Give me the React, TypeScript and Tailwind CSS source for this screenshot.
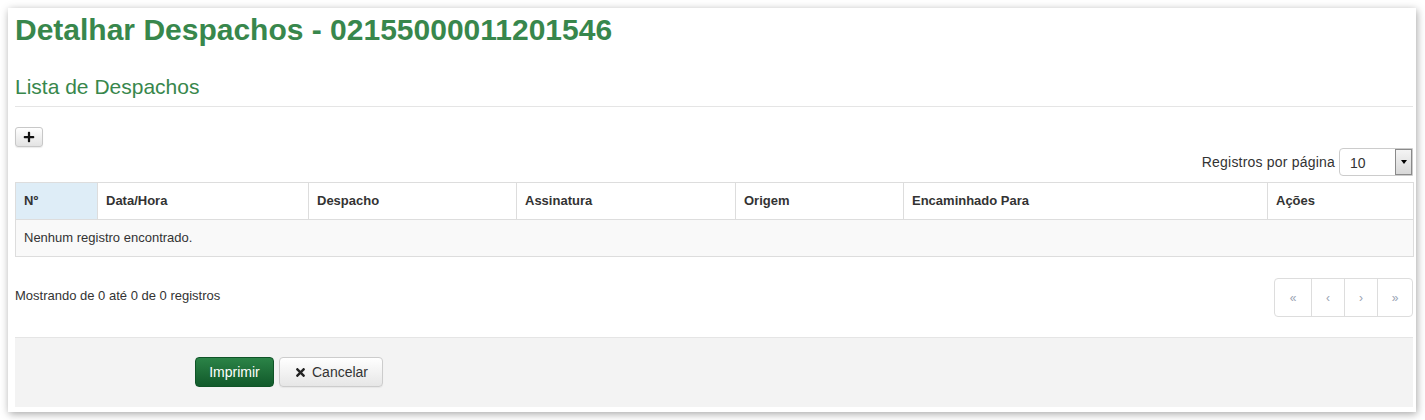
import React from "react";
import { FaPlus, FaTimes } from "react-icons/fa";

const cols = [
  { label: "Nº", w: "w-[82px]", sorted: true },
  { label: "Data/Hora", w: "w-[211px]" },
  { label: "Despacho", w: "w-[208px]" },
  { label: "Assinatura", w: "w-[219px]" },
  { label: "Origem", w: "w-[168px]" },
  { label: "Encaminhado Para", w: "w-[364px]" },
  { label: "Ações", w: "w-[146px]" },
];

const App = () => {
  return (
    <div className="bg-white h-[420px] overflow-hidden pt-2 pl-2 font-['Liberation_Sans',Arial,sans-serif] text-[#333]">
      <div className="w-[1408px] h-[404px] bg-white shadow-[1px_2px_8px_rgba(0,0,0,0.35)] pl-[7px] pr-[3px] pt-[5px]">
        {/* title */}
        <h1 className="text-[30px] leading-[33px] font-bold text-[#38874c]">
          Detalhar Despachos - 02155000011201546
        </h1>
        <h3 className="mt-[29px] text-[21px] leading-[24px] text-[#38874c]">
          Lista de Despachos
        </h3>
        <div className="mt-[7px] h-px bg-[#e5e5e5]"></div>

        {/* add button */}
        <div className="mt-[20px]">
          <button className="w-[28px] h-[20px] flex items-center justify-center rounded-[3px] border border-[#c8c8c8] bg-gradient-to-b from-white to-[#e3e3e3] shadow-[0_1px_1px_rgba(0,0,0,0.08)]">
            <FaPlus className="text-[12px] text-[#111]" />
          </button>
        </div>

        {/* page length */}
        <div className="flex justify-end items-center mt-px">
          <span className="text-[14px] mr-[4px] tracking-[0.2px]">Registros por página</span>
          <div className="w-[74px] h-[28px] flex border border-[#ccc] rounded-l-[4px] bg-white">
            <span className="flex-1 pl-[10px] pt-[6px] text-[14px] leading-[16px]">10</span>
            <div className="w-[17px] border border-[#8a8a8a] bg-gradient-to-b from-[#f4f4f4] to-[#d8d8d8] flex items-center justify-center">
              <div className="w-0 h-0 border-l-[3.5px] border-r-[3.5px] border-t-[4px] border-l-transparent border-r-transparent border-t-black"></div>
            </div>
          </div>
        </div>

        {/* table */}
        <table className="mt-[6px] w-full table-fixed border-collapse text-[13px]">
          <colgroup>
            {cols.map((c) => (
              <col key={c.label} className={c.w} />
            ))}
          </colgroup>
          <thead>
            <tr className="h-[37px]">
              {cols.map((c) => (
                <th
                  key={c.label}
                  className={
                    "border border-[#ddd] text-left font-bold px-[8px] " +
                    (c.sorted ? "bg-[#deedf7]" : "bg-white")
                  }
                >
                  {c.label}
                </th>
              ))}
            </tr>
          </thead>
          <tbody>
            <tr className="h-[37px] bg-[#f9f9f9]">
              <td colSpan={7} className="border border-[#ddd] px-[8px] text-[13px]">
                Nenhum registro encontrado.
              </td>
            </tr>
          </tbody>
        </table>

        {/* info + pagination */}
        <div className="mt-[21px] flex items-center justify-between">
          <span className="text-[13px] -mt-[3px]">Mostrando de 0 até 0 de 0 registros</span>
          <div className="flex h-[39px] border border-[#ddd] rounded-[4px] text-[12px] text-[#9aa3b3]">
            <span className="w-[36px] flex items-center justify-center">«</span>
            <span className="w-[33px] flex items-center justify-center border-l border-[#ddd]">‹</span>
            <span className="w-[33px] flex items-center justify-center border-l border-[#ddd]">›</span>
            <span className="w-[35px] flex items-center justify-center border-l border-[#ddd]">»</span>
          </div>
        </div>

        {/* footer */}
        <div className="mt-[20px] h-[70px] bg-[#f3f3f3] border-t border-[#e5e5e5] pt-[19px] pl-[180px] flex items-start gap-[5px]">
          <button className="w-[79px] h-[30px] rounded-[4px] border border-[#0f5427] bg-gradient-to-b from-[#2b8347] to-[#115a2b] text-white text-[14px]">
            Imprimir
          </button>
          <button className="w-[104px] h-[30px] rounded-[4px] border border-[#ccc] bg-gradient-to-b from-white to-[#e6e6e6] text-[14px] flex items-center justify-center gap-[5px] shadow-[0_1px_1px_rgba(0,0,0,0.05)]">
            <FaTimes className="text-[13px] text-[#222]" />
            Cancelar
          </button>
        </div>
      </div>
    </div>
  );
};

export default App;
